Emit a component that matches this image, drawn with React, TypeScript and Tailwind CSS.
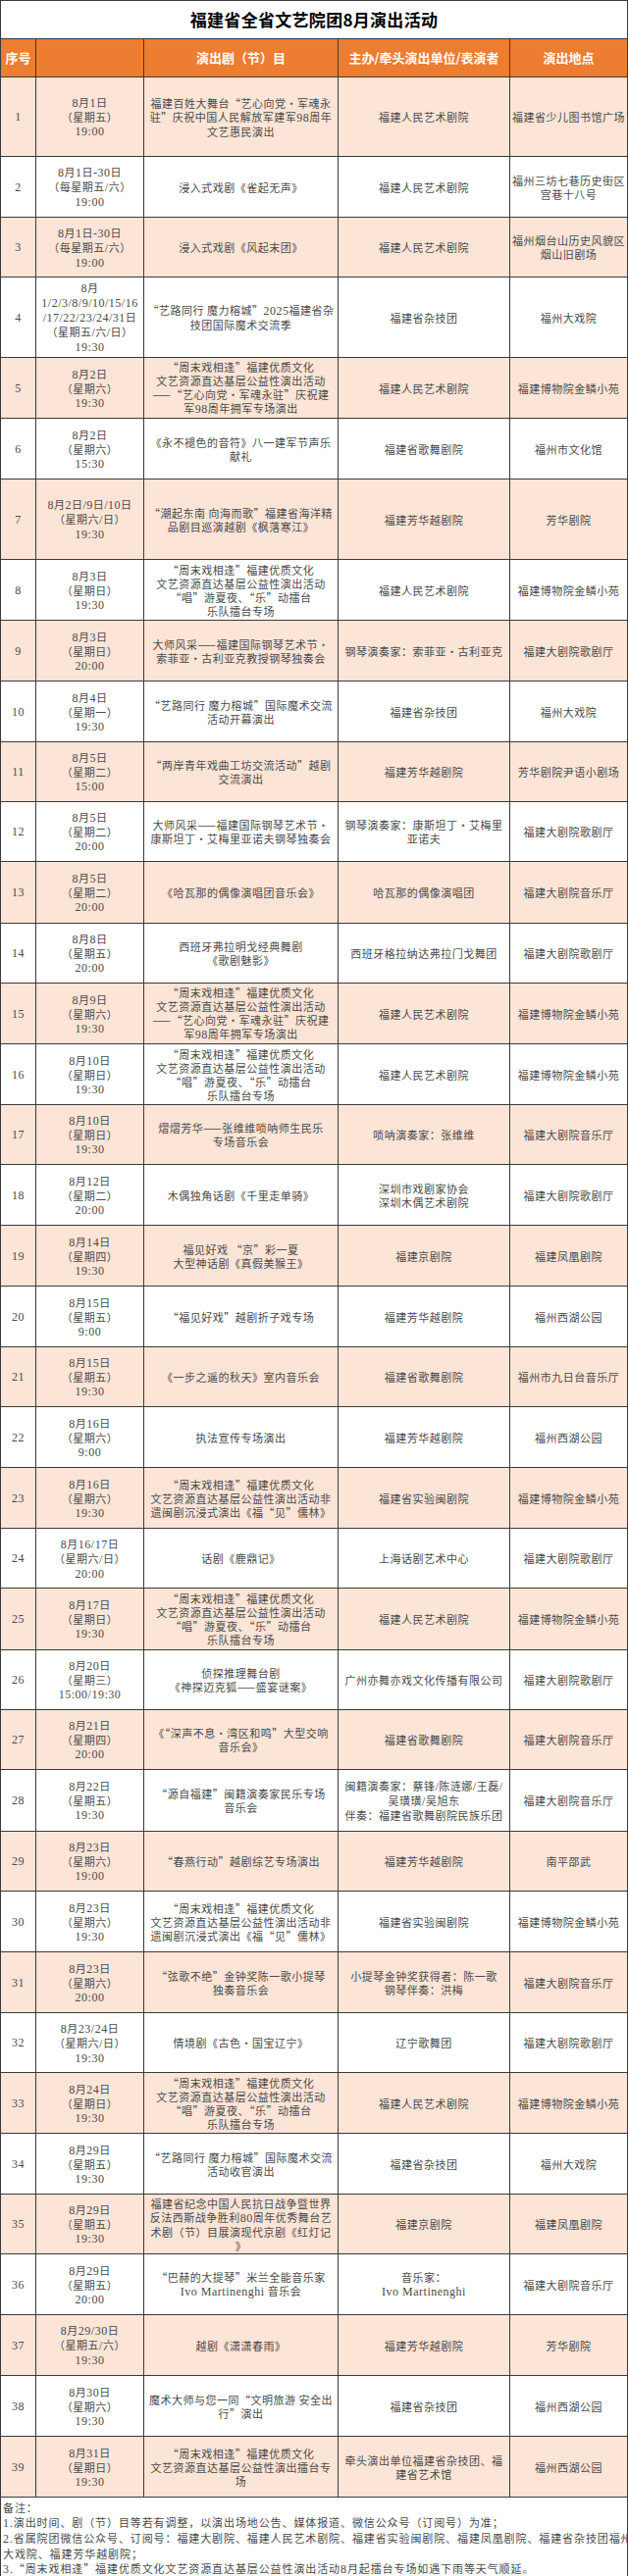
import React from "react";

type Row = [string, string, string, string, string, number];

const W = "（每星期五/六）";
const ZM1 = "“周末戏相逢”福建优质文化|文艺资源直达基层公益性演出活动";
const ZM_ARMY = ZM1 + "|——“艺心向党·军魂永驻”庆祝建|军98周年拥军专场演出";
const ZM_BAND = ZM1 + "|“唱”游夏夜、“乐”动擂台|乐队擂台专场";
const ZM_MIN = "“周末戏相逢”福建优质文化|文艺资源直达基层公益性演出活动非|遗闽剧沉浸式演出《福“见”儒林》";

const rows: Row[] = [
  ["1", "8月1日|（星期五）|19:00", "福建百姓大舞台“艺心向党·军魂永|驻”庆祝中国人民解放军建军98周年|文艺惠民演出", "福建人民艺术剧院", "福建省少儿图书馆广场", 81],
  ["2", "8月1日-30日|" + W + "|19:00", "浸入式戏剧《雀起无声》", "福建人民艺术剧院", "福州三坊七巷历史街区|宫巷十八号", 62],
  ["3", "8月1日-30日|" + W + "|19:00", "浸入式戏剧《风起末团》", "福建人民艺术剧院", "福州烟台山历史风貌区|烟山旧剧场", 61],
  ["4", "8月|1/2/3/8/9/10/15/16|/17/22/23/24/31日|（星期五/六/日）|19:30", "“艺路同行 魔力榕城”2025福建省杂|技团国际魔术交流季", "福建省杂技团", "福州大戏院", 82],
  ["5", "8月2日|（星期六）|19:30", ZM_ARMY, "福建人民艺术剧院", "福建博物院金鳞小苑", 62],
  ["6", "8月2日|（星期六）|15:30", "《永不褪色的音符》八一建军节声乐|献礼", "福建省歌舞剧院", "福州市文化馆", 62],
  ["7", "8月2日/9日/10日|（星期六/日）|19:30", "“潮起东南 向海而歌”福建省海洋精|品剧目巡演越剧《枫落寒江》", "福建芳华越剧院", "芳华剧院", 82],
  ["8", "8月3日|（星期日）|19:30", ZM_BAND, "福建人民艺术剧院", "福建博物院金鳞小苑", 62],
  ["9", "8月3日|（星期日）|20:00", "大师风采——福建国际钢琴艺术节·|索菲亚·古利亚克教授钢琴独奏会", "钢琴演奏家：索菲亚·古利亚克", "福建大剧院歌剧厅", 62],
  ["10", "8月4日|（星期一）|19:30", "“艺路同行 魔力榕城”国际魔术交流|活动开幕演出", "福建省杂技团", "福州大戏院", 62],
  ["11", "8月5日|（星期二）|15:00", "“两岸青年戏曲工坊交流活动”越剧|交流演出", "福建芳华越剧院", "芳华剧院尹语小剧场", 61],
  ["12", "8月5日|（星期二）|20:00", "大师风采——福建国际钢琴艺术节·|康斯坦丁·艾梅里亚诺夫钢琴独奏会", "钢琴演奏家：康斯坦丁·艾梅里|亚诺夫", "福建大剧院歌剧厅", 61],
  ["13", "8月5日|（星期二）|20:00", "《哈瓦那的偶像演唱团音乐会》", "哈瓦那的偶像演唱团", "福建大剧院音乐厅", 63],
  ["14", "8月8日|（星期五）|20:00", "西班牙弗拉明戈经典舞剧|《歌剧魅影》", "西班牙格拉纳达弗拉门戈舞团", "福建大剧院歌剧厅", 61],
  ["15", "8月9日|（星期六）|19:30", ZM_ARMY, "福建人民艺术剧院", "福建博物院金鳞小苑", 62],
  ["16", "8月10日|（星期日）|19:30", ZM_BAND, "福建人民艺术剧院", "福建博物院金鳞小苑", 62],
  ["17", "8月10日|（星期日）|19:30", "熠熠芳华——张维维唢呐师生民乐|专场音乐会", "唢呐演奏家：张维维", "福建大剧院音乐厅", 61],
  ["18", "8月12日|（星期二）|20:00", "木偶独角话剧《千里走单骑》", "深圳市戏剧家协会|深圳木偶艺术剧院", "福建大剧院歌剧厅", 62],
  ["19", "8月14日|（星期四）|19:30", "福见好戏 “京”彩一夏|大型神话剧《真假美猴王》", "福建京剧院", "福建凤凰剧院", 62],
  ["20", "8月15日|（星期五）|9:00", "“福见好戏”越剧折子戏专场", "福建芳华越剧院", "福州西湖公园", 62],
  ["21", "8月15日|（星期五）|19:30", "《一步之遥的秋天》室内音乐会", "福建省歌舞剧院", "福州市九日台音乐厅", 61],
  ["22", "8月16日|（星期六）|9:00", "执法宣传专场演出", "福建芳华越剧院", "福州西湖公园", 62],
  ["23", "8月16日|（星期六）|19:30", ZM_MIN, "福建省实验闽剧院", "福建博物院金鳞小苑", 62],
  ["24", "8月16/17日|（星期六/日）|20:00", "话剧《鹿鼎记》", "上海话剧艺术中心", "福建大剧院歌剧厅", 61],
  ["25", "8月17日|（星期日）|19:30", ZM_BAND, "福建人民艺术剧院", "福建博物院金鳞小苑", 63],
  ["26", "8月20日|（星期三）|15:00/19:30", "侦探推理舞台剧|《神探迈克狐——盛宴谜案》", "广州亦舞亦戏文化传播有限公司", "福建大剧院歌剧厅", 61],
  ["27", "8月21日|（星期四）|20:00", "《“深声不息·湾区和鸣”大型交响|音乐会》", "福建省歌舞剧院", "福建大剧院音乐厅", 61],
  ["28", "8月22日|（星期五）|19:30", "“源自福建”闽籍演奏家民乐专场|音乐会", "闽籍演奏家：蔡锋/陈涟娜/王磊/|吴璜璜/吴旭东|伴奏：福建省歌舞剧院民族乐团", "福建大剧院音乐厅", 63],
  ["29", "8月23日|（星期六）|19:00", "“春燕行动”越剧综艺专场演出", "福建芳华越剧院", "南平邵武", 61],
  ["30", "8月23日|（星期六）|19:30", ZM_MIN, "福建省实验闽剧院", "福建博物院金鳞小苑", 62],
  ["31", "8月23日|（星期六）|20:00", "“弦歌不绝”金钟奖陈一歌小提琴|独奏音乐会", "小提琴金钟奖获得者：陈一歌|钢琴伴奏：洪梅", "福建大剧院音乐厅", 62],
  ["32", "8月23/24日|（星期六/日）|19:30", "情境剧《古色·国宝辽宁》", "辽宁歌舞团", "福建大剧院歌剧厅", 61],
  ["33", "8月24日|（星期日）|19:30", ZM_BAND, "福建人民艺术剧院", "福建博物院金鳞小苑", 62],
  ["34", "8月29日|（星期五）|19:30", "“艺路同行 魔力榕城”国际魔术交流|活动收官演出", "福建省杂技团", "福州大戏院", 62],
  ["35", "8月29日|（星期五）|19:30", "福建省纪念中国人民抗日战争暨世界|反法西斯战争胜利80周年优秀舞台艺|术剧（节）目展演现代京剧《红灯记|》", "福建京剧院", "福建凤凰剧院", 61],
  ["36", "8月29日|（星期五）|20:00", "“巴赫的大提琴”米兰全能音乐家|Ivo Martinenghi 音乐会", "音乐家：|Ivo Martinenghi", "福建大剧院音乐厅", 62],
  ["37", "8月29/30日|（星期五/六）|19:30", "越剧《潇潇春雨》", "福建芳华越剧院", "芳华剧院", 62],
  ["38", "8月30日|（星期六）|19:30", "魔术大师与您一同“文明旅游 安全出|行”演出", "福建省杂技团", "福州西湖公园", 62],
  ["39", "8月31日|（星期日）|19:30", "“周末戏相逢”福建优质文化|文艺资源直达基层公益性演出擂台专|场", "牵头演出单位福建省杂技团、福|建省艺术馆", "福州西湖公园", 62],
];

const HEIGHTS: Record<number, string> = {
  61: "h-[61px]",
  62: "h-[62px]",
  63: "h-[63px]",
  81: "h-[81px]",
  82: "h-[82px]",
};

function Runs({ s }: { s: string }) {
  const parts = s.split(/([0-9A-Za-z:/\-.]+(?: [0-9A-Za-z:/\-.]+)*)/);
  return (
    <>
      {parts.map((p, i) =>
        i % 2 === 1 ? (
          <span key={i} className="font-['Liberation_Serif'] text-[12px]">
            {p}
          </span>
        ) : (
          <React.Fragment key={i}>{p}</React.Fragment>
        )
      )}
    </>
  );
}

function Lines({ text }: { text: string }) {
  return (
    <div className="flex flex-col items-center">
      {text.split("|").map((l, i) => (
        <div key={i} className="whitespace-nowrap leading-[14px]">
          <Runs s={l} />
        </div>
      ))}
    </div>
  );
}

const cell = "flex items-center justify-center text-center border-r border-b border-[#3a3a3a] overflow-hidden";

export default function App() {
  return (
    <div className="w-[640px] bg-white font-['Noto_Sans_CJK_SC',sans-serif]">
      <div className="border-l border-t border-[#3a3a3a]">
        <div className="h-[39px] flex items-center justify-center border-r border-b border-[#3a3a3a] text-[17px] font-bold text-black tracking-[0.3px]">
          福建省全省文艺院团8月演出活动
        </div>
        <div className="grid grid-cols-[36px_110px_198px_175px_120px] h-[39px] bg-[#ED7D31] text-white font-bold text-[13px]">
          <div className={cell}>序号</div>
          <div className={cell}></div>
          <div className={cell}>演出剧（节）目</div>
          <div className={cell}>主办/牵头演出单位/表演者</div>
          <div className={cell}>演出地点</div>
        </div>
        {rows.map((r, idx) => (
          <div
            key={r[0]}
            className={
              "grid grid-cols-[36px_110px_198px_175px_120px] text-[11px] tracking-[0.5px] text-[#4a4a4a] " +
              HEIGHTS[r[5]] +
              " " +
              (idx % 2 === 0 ? "bg-[#FCE4D6]" : "bg-white")
            }
          >
            <div className={cell}>
              <span className="font-['Liberation_Serif'] text-[12px]">{r[0]}</span>
            </div>
            <div className={cell}>
              <Lines text={r[1]} />
            </div>
            <div className={cell}>
              <Lines text={r[2]} />
            </div>
            <div className={cell}>
              <Lines text={r[3]} />
            </div>
            <div className={cell}>
              <Lines text={r[4]} />
            </div>
          </div>
        ))}
        <div className="h-[81px] border-r border-b border-[#3a3a3a] pl-[2px] pt-[3px] text-[11px] tracking-[0.9px] leading-[15px] text-[#4a4a4a]">
          <div className="whitespace-nowrap">备注：</div>
          <div className="whitespace-nowrap">
            <Runs s="1.演出时间、剧（节）目等若有调整，以演出场地公告、媒体报道、微信公众号（订阅号）为准；" />
          </div>
          <div className="whitespace-nowrap">
            <Runs s="2.省属院团微信公众号、订阅号：福建大剧院、福建人民艺术剧院、福建省实验闽剧院、福建凤凰剧院、福建省杂技团福州" />
          </div>
          <div className="whitespace-nowrap">大戏院、福建芳华越剧院；</div>
          <div className="whitespace-nowrap">
            <Runs s="3.“周末戏相逢”福建优质文化文艺资源直达基层公益性演出活动8月起擂台专场如遇下雨等天气顺延。" />
          </div>
        </div>
      </div>
    </div>
  );
}
